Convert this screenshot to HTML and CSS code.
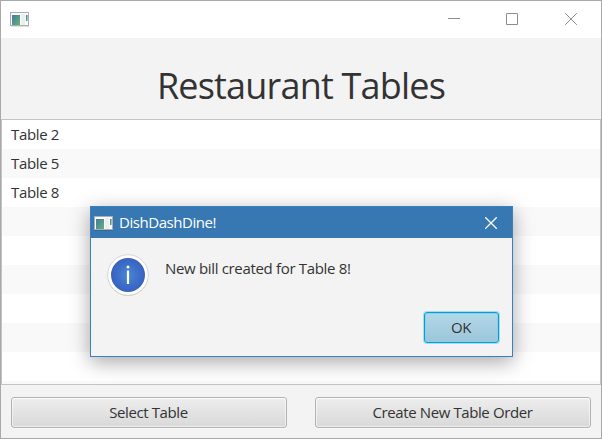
FILE: index.html
```html
<!DOCTYPE html>
<html lang="en">
<head>
<meta charset="utf-8">
<title>Restaurant Tables</title>
<link rel="stylesheet" href="styles.css">
</head>
<body>
<svg width="0" height="0" class="defs">
  <defs>
    <linearGradient id="pane" x1="0" y1="0" x2="1" y2="1">
      <stop offset="0" stop-color="#4778a3"/><stop offset="1" stop-color="#5fb673"/>
    </linearGradient>
    <symbol id="app" viewBox="0 0 19 16">
      <path d="M1 15.5h18" stroke="#000" stroke-opacity=".12"/>
      <rect x=".5" y="1.5" width="18" height="13" fill="#fbfbfb" stroke="#a9adb3"/>
      <rect x="2" y="4" width="8" height="10" fill="url(#pane)"/>
      <rect x="11" y="3" width="4" height="11" fill="#eeeeee"/>
      <rect x="16" y="4" width="1.6" height="6" fill="url(#pane)"/>
    </symbol>
    <radialGradient id="blue"><stop offset="0" stop-color="#4787d9"/><stop offset="1" stop-color="#3861be"/></radialGradient>
  </defs>
</svg>
<div class="window">
  <header class="titlebar">
    <svg class="app-icon" width="19" height="16"><use href="#app"/></svg>
    <div class="controls">
      <svg width="12" height="12" viewBox="0 0 12 12"><path d="M0 5.5h12"/></svg>
      <svg width="12" height="12" viewBox="0 0 12 12"><path d="M.5.5h11v11H.5z"/></svg>
      <svg class="window-close" width="12" height="12" viewBox="0 0 12 12"><path d="M.2.2l11.6 11.6M11.8.2L.2 11.8"/></svg>
    </div>
  </header>
  <h1 class="heading"><span>Restaurant Tables</span></h1>
  <ul class="list">
    <li><span>Table 2</span></li>
    <li><span>Table 5</span></li>
    <li><span>Table 8</span></li>
    <li></li><li></li><li></li><li></li><li></li><li></li><li></li>
  </ul>
  <footer class="actions">
    <button class="button"><span>Select Table</span></button>
    <button class="button"><span>Create New Table Order</span></button>
  </footer>
</div>
<section class="dialog">
  <div class="dialog-title">
    <svg class="app-icon" width="19" height="16"><use href="#app"/></svg>
    <span class="dialog-name">DishDashDine!</span>
    <svg class="close" width="12" height="12" viewBox="0 0 12 12"><path d="M.2.2l11.6 11.6M11.8.2L.2 11.8"/></svg>
  </div>
  <div class="dialog-body">
    <svg width="42" height="43" viewBox="0 0 42 43">
      <circle cx="21" cy="21.5" r="20.3" fill="#c4c4c4"/>
      <circle cx="21" cy="21" r="20.3" fill="#fff" stroke="#cfcfcf" stroke-width=".8"/>
      <circle cx="21" cy="21" r="17" fill="url(#blue)"/>
      <circle cx="21" cy="13" r="1.5" fill="#fff"/>
      <path d="M21 16.5v13.5" stroke="#fff" stroke-width="2.2"/>
    </svg>
    <p class="message"><span>New bill created for Table 8!</span></p>
  </div>
  <div class="dialog-actions"><button class="button ok"><span>OK</span></button></div>
</section>
</body>
</html>
```
FILE: styles.css
```css
* { box-sizing: border-box; }
body {
  margin: 0;
  width: 602px;
  height: 439px;
  overflow: hidden;
  font: 15px/18px "Open Sans", "Noto Sans", sans-serif;
  color: #333;
}
.defs { position: absolute; }
.window {
  display: flex;
  flex-direction: column;
  width: 602px;
  height: 439px;
  border: 1px solid #a9a9a9;
  background: #f3f3f3;
}
.titlebar {
  display: flex;
  justify-content: space-between;
  align-items: flex-start;
  height: 37px;
  padding: 10px 24px 0 9px;
  background: #fff;
}
.controls { display: flex; gap: 46px; padding-top: 2px; }
.controls path { fill: none; stroke: #8c8c8c; }
.window-close { margin-left: 1px; }
.heading {
  height: 81px;
  margin: 0;
  padding-top: 20px;
  text-align: center;
  font-size: 36px;
  font-weight: 400;
  line-height: 56px;
}
span { white-space: nowrap; }
.heading span { display: inline-block; letter-spacing: -0.8px; }
.list {
  height: 266px;
  margin: 0;
  padding: 0;
  overflow: hidden;
  list-style: none;
  border: 1px solid #c4c4c4;
  background: #fff;
}
.list li { height: 29px; padding: 5px 9px; letter-spacing: -0.35px; }
.list li:nth-child(even) { background: #f9f9f9; }
.actions { display: flex; gap: 28px; padding: 12px 10px 0; }
.button {
  flex: 1;
  height: 31px;
  padding: 0 1px 2px 0;
  border: 1px solid #b2b2b2;
  border-radius: 3px;
  background: linear-gradient(#ededed, #d9d9d9);
  box-shadow: inset 0 0 0 1px #ffffff88, inset 0 1px #fff, 0 1px #fafafa;
  font: inherit;
  color: #333;
  letter-spacing: -0.4px;
}
.dialog {
  position: absolute;
  left: 90px;
  top: 206px;
  width: 423px;
  height: 151px;
  border: 1px solid #3b7fbf;
  background: #f3f3f3;
  box-shadow: 0 5px 19px rgba(0, 0, 0, .35);
}
.dialog-title {
  display: flex;
  align-items: center;
  height: 31px;
  padding: 0 15px 0 3px;
  background: #3778b3;
  color: #fff;
}
.dialog-name { margin-left: 6px; padding-bottom: 2px; letter-spacing: -0.45px; }
.close { margin-left: auto; fill: none; stroke: #fff; stroke-width: 1.3; }
.dialog-body { display: flex; gap: 16px; height: 74px; padding: 16px 16px 0; }
.message { margin: 5px 0 0; letter-spacing: -0.33px; }
.dialog-actions { display: flex; justify-content: flex-end; padding-right: 13px; }
.ok {
  flex: none;
  width: 75px;
  border-color: #039ed3;
  background: linear-gradient(#b2d9e9, #9cc5d9);
  box-shadow: 0 0 0 1px #a5ddee, inset 0 0 0 1px #8fcfe5;
}
```
